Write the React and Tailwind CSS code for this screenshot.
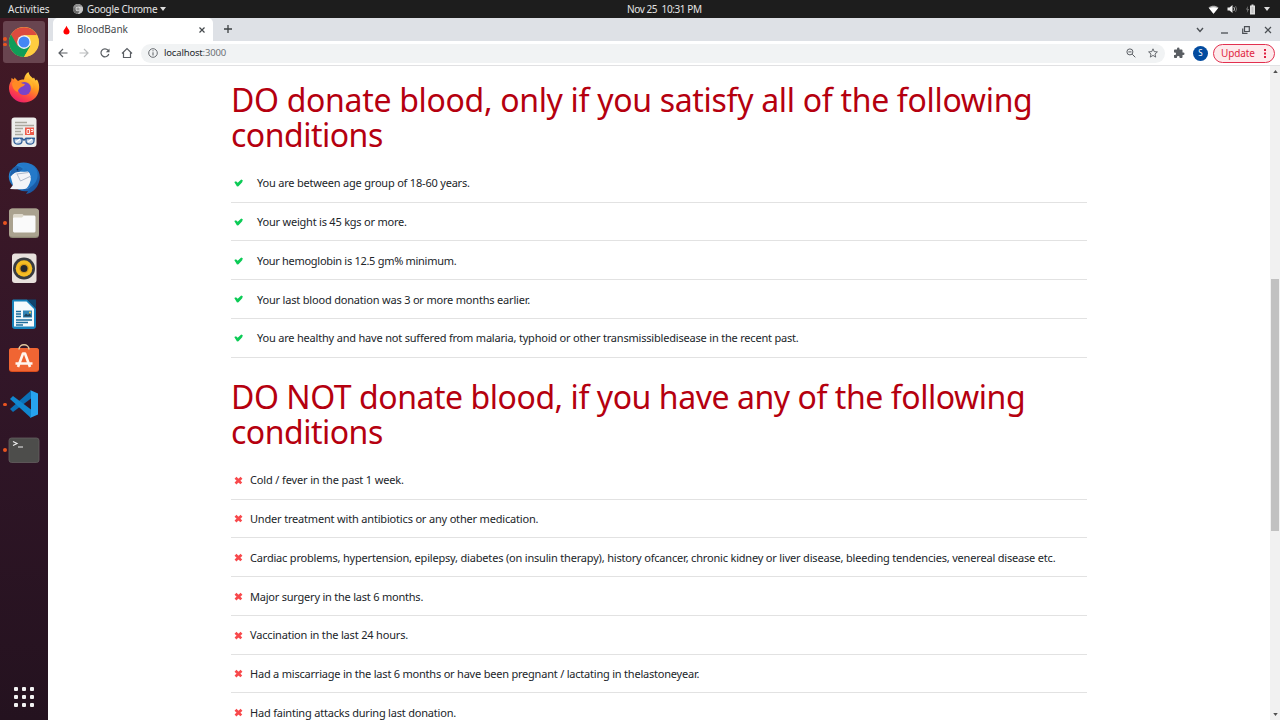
import React from "react";

const DO_ITEMS = [
  ["You are between age group of 18-60 years.", "tracking-[-0.2px]"],
  ["Your weight is 45 kgs or more.", "tracking-[-0.215px]"],
  ["Your hemoglobin is 12.5 gm% minimum.", "tracking-[-0.29px]"],
  ["Your last blood donation was 3 or more months earlier.", "tracking-[-0.19px]"],
  ["You are healthy and have not suffered from malaria, typhoid or other transmissibledisease in the recent past.", "tracking-[-0.195px]"],
];

const DONT_ITEMS = [
  ["Cold / fever in the past 1 week.", "tracking-[-0.14px]"],
  ["Under treatment with antibiotics or any other medication.", "tracking-[-0.18px]"],
  ["Cardiac problems, hypertension, epilepsy, diabetes (on insulin therapy), history ofcancer, chronic kidney or liver disease, bleeding tendencies, venereal disease etc.", "tracking-[-0.187px]"],
  ["Major surgery in the last 6 months.", "tracking-[-0.22px]"],
  ["Vaccination in the last 24 hours.", "tracking-[-0.18px]"],
  ["Had a miscarriage in the last 6 months or have been pregnant / lactating in thelastoneyear.", "tracking-[-0.213px]"],
  ["Had fainting attacks during last donation.", "tracking-[-0.2px]"],
];

function ChromeLogo({ className, mono }) {
  const [r, y, g, b] = mono
    ? ["#8c8c8c", "#c4c4c4", "#6b6b6b", "#9a9a9a"]
    : ["#dd4b3e", "#ffcd40", "#109d58", "#4487f4"];
  return (
    <svg viewBox="0 0 48 48" className={className}>
      <circle cx="24" cy="24" r="24" fill={y} />
      <path d="M24 24 L3.2 12 A24 24 0 0 0 24 48 L34.4 30 Z" fill={g} />
      <path d="M24 24 L13.6 30 L3.2 12 A24 24 0 0 1 44.8 13 L24 13 Z" fill={r} />
      <path d="M24 13 H44.8 A24 24 0 0 1 24 48 L34.4 30 Z" fill={y} />
      <circle cx="24" cy="24" r="11" fill="#f4f4f4" />
      <circle cx="24" cy="24" r="8.8" fill={b} />
    </svg>
  );
}

function Firefox() {
  return (
    <svg viewBox="0 0 32 32" className="size-8">
      <defs>
        <linearGradient id="ffBody" x1="0.8" y1="0" x2="0.25" y2="1">
          <stop offset="0" stopColor="#ffe34a" />
          <stop offset="0.4" stopColor="#ff9a1f" />
          <stop offset="0.7" stopColor="#ff4a42" />
          <stop offset="1" stopColor="#e8196f" />
        </linearGradient>
      </defs>
      <path d="M20.500 1 C21 4 23 5.500 25 7.500 L26 6.500 L27.500 9.500 L29 8.500 C31 12 31.500 15 31 18.500 C30 26.500 23.500 31.500 16 31.500 C8 31.500 1.500 25.500 1 18 C.8 14.500 1.800 12 3.200 10 L3.500 7 L6 8.500 L6.500 6.500 L10 10 C12 8.500 14 8.500 16 8.500 C16.500 5 18 2.500 20.500 1Z" fill="url(#ffBody)" />
      <circle cx="16.300" cy="17.500" r="6.600" fill="#7844c8" />
      <path d="M4 12 C7 9.500 12 10 14 12.500 L17 13 C16.500 15 14 15.500 12.500 16.500 C11 18 9.500 19 10 21 C6 20 4 16 4 12Z" fill="#ff8a24" />
      <path d="M14 10 C20 9 24 13 24 18 C26 14 24 9.500 20.500 8.500 Z" fill="#ffb52b" />
    </svg>
  );
}

function DocumentViewer() {
  return (
    <svg viewBox="0 0 32 32" className="size-8">
      <rect x="3.500" y="1.500" width="25" height="29.500" rx="3" fill="#eeeeec" />
      <g stroke="#aaa99f" strokeWidth="1.300">
        <path d="M7 6.500H19M7 9.500H26M7 12.500H15M7 15.500H13M7 18.500H15" />
      </g>
      <rect x="17" y="11.500" width="9" height="7.500" fill="#ed5c4c" />
      <path d="M19 17.500V13.500H21.500V17.500ZM23 13.500H25V15.500H23" fill="none" stroke="#fff" strokeWidth=".9" />
      <path d="M5 22.500H14L16 24L18 22.500H27" fill="none" stroke="#315f98" strokeWidth="1.500" />
      <path d="M6 22.500H14V25C14 29 6.500 29.500 6 25ZM18 22.500H26V25C25.500 29.500 18 29 18 25Z" fill="#c9d9ea" stroke="#315f98" strokeWidth="1.300" />
      <path d="M8 26L12 23M20 26L24 23" stroke="#fff" strokeWidth="1.200" />
    </svg>
  );
}

function Thunderbird() {
  return (
    <svg viewBox="0 0 32 32" className="size-8">
      <defs>
        <linearGradient id="tb" x1="0" y1="0" x2="1" y2="1">
          <stop offset="0" stopColor="#2b94e2" />
          <stop offset="1" stopColor="#154a94" />
        </linearGradient>
      </defs>
      <path d="M10 1.500C15 -.5 22 .5 26.500 4C31.500 8 33 15 31 20C29 27 24 31 18 32L20 29C15 30 9 28 5 24C1 20 -.5 15 2 9L6 6Z" fill="url(#tb)" />
      <path d="M2.500 14L8 9.500L21 10L25.500 17L21 26C15 28 9 27 2 27L5 23Z" fill="#f3f5f8" />
      <path d="M8 12L12.500 19.500L24 15M8 12L21 11" fill="none" stroke="#aebacb" strokeWidth="1" />
      <path d="M8 4C12 2 17 5 21 10C24 15 23 22 18 27C28 24 32 15 28 7C23 0 14 -1 8 4Z" fill="#2479c9" />
      <path d="M5 16L9 11L20 9.500L22 13L22.500 18L19 24C13 26.500 8 26 5 23Z" fill="#f3f5f8" />
      <path d="M9 12L12.500 19L22 14.500M9 12L20.500 10.500" fill="none" stroke="#aebacb" strokeWidth="1" />
      <path d="M5 6C2.500 9 1.500 12 2.500 15C5 11 8 10 11 10L15 7C13 5 11 4 8 4Z" fill="#1e63ad" />
      <circle cx="9.500" cy="7.500" r=".9" fill="#092d57" />
    </svg>
  );
}

function Files() {
  return (
    <svg viewBox="0 0 32 32" className="size-8">
      <rect x="1" y="1.500" width="30" height="29.500" rx="3.500" fill="#8f8876" />
      <rect x="1" y="1.500" width="30" height="28.300" rx="3.500" fill="#aaa28f" />
      <path d="M5 9C5 7.500 5.500 7 7 7H14.500L16.500 9H25C26.500 9 27 9.500 27 11V23C27 24.500 26.500 25 25 25H7C5.500 25 5 24.500 5 23Z" fill="#ddd8cb" />
      <path d="M5 11.500C5 10.500 5.500 10.500 7 10.500H14L16 8.500H25.500C27 8.500 27.500 9 27.500 10.500V23.500C27.500 25 27 25.500 25.500 25.500H7C5.500 25.500 5 25 5 23.500Z" fill="#fafafa" />
    </svg>
  );
}

function Rhythmbox() {
  return (
    <svg viewBox="0 0 32 32" className="size-8">
      <rect x="4" y="1.500" width="24.500" height="29.500" rx="3" fill="#e8e1dd" />
      <circle cx="16" cy="16.500" r="11" fill="#383b40" />
      <circle cx="16" cy="16.500" r="8.300" fill="#f5bd23" />
      <circle cx="16" cy="16.500" r="4.800" fill="#d99c1a" />
      <circle cx="16" cy="16.500" r="3.500" fill="#26282c" />
    </svg>
  );
}

function Writer() {
  return (
    <svg viewBox="0 0 32 32" className="size-8">
      <path d="M6 1.500H19L28 10.500V28C28 30 27 31 25 31H7C5 31 4 30 4 28V3.500C4 2 4.500 1.500 6 1.500Z" fill="#1783bc" />
      <path d="M6 3.500H18.500L26 11V28.500H6Z" fill="#f5fafc" />
      <path d="M19 1.500H28V10.500Z" fill="#0f456e" />
      <path d="M8 13.500H13M8 16H13M8 18.500H13M8 22H24M8 24.500H20M8 27H15" stroke="#1d6e9d" strokeWidth="1.300" />
      <rect x="15" y="12.500" width="9" height="7" fill="#3385b6" />
      <path d="M15.500 18.500L18 15.500L20 17L21.500 15.500L23.500 18.500" fill="#21445b" />
      <circle cx="22" cy="14.500" r="1" fill="#ffd94a" />
    </svg>
  );
}

function Software() {
  return (
    <svg viewBox="0 0 32 32" className="size-8">
      <rect x="1" y="5" width="30" height="24" rx="3" fill="#d94c1c" />
      <rect x="1" y="5" width="30" height="23" rx="3" fill="#f06533" />
      <path d="M11 6.500C11 .3 21 .3 21 6.500" fill="none" stroke="#e3caa0" strokeWidth="1.500" />
      <path d="M10 24L15 10.500H17L22 24M7.500 20.500H24.500" fill="none" stroke="#fff5ee" strokeWidth="2.600" strokeLinejoin="round" />
    </svg>
  );
}

function VSCode() {
  return (
    <svg viewBox="0 0 32 32" className="size-8">
      <path d="M23 2.500L2 21L5 24L23 10.500Z" fill="#0b70b7" />
      <path d="M2 11L5 8L23 21.500V30Z" fill="#1187cf" />
      <path d="M22 2L30 5.500V26.500L22 30C22.700 29.500 23 29 23 28V4C23 3 22.700 2.500 22 2Z" fill="#27a3ef" />
    </svg>
  );
}

function Terminal() {
  return (
    <svg viewBox="0 0 32 32" className="size-8">
      <rect x="1" y="4" width="30" height="24.500" rx="2.500" fill="#4d4d4b" stroke="#65605f" strokeWidth=".8" />
      <path d="M5 7.500L9 9.500L5 11.500M10 13H15" fill="none" stroke="#eee" strokeWidth="1.200" />
    </svg>
  );
}

const DOCK = [
  { icon: <ChromeLogo className="size-[30px]" />, dots: 2, active: true },
  { icon: <Firefox /> },
  { icon: <DocumentViewer /> },
  { icon: <Thunderbird /> },
  { icon: <Files />, dots: 1 },
  { icon: <Rhythmbox /> },
  { icon: <Writer /> },
  { icon: <Software /> },
  { icon: <VSCode />, dots: 1 },
  { icon: <Terminal />, dots: 1 },
];

function TopBar() {
  return (
    <header className="relative flex h-[18px] shrink-0 items-center bg-[#1d1d1d] text-[10px] leading-[18px] whitespace-nowrap text-[#e4e4e4]">
      <span className="ml-2 w-[65px]">Activities</span>
      <ChromeLogo mono className="size-[10px]" />
      <span className="ml-1 tracking-[-0.27px]">Google Chrome</span>
      <svg viewBox="0 0 6 4" className="ml-[3px] h-1 w-1.5"><path d="M0 0H6L3 4Z" fill="#ddd" /></svg>
      <span className="absolute left-[627px] whitespace-pre tracking-[-0.4px]">Nov 25  10:31 PM</span>
      <div className="ml-auto flex items-center pr-[10px]">
        <svg viewBox="0 0 11 9" className="mr-2 h-[9px] w-[11px]">
          <path d="M.5 2.500C3.500 0 7.500 0 10.500 2.500L5.500 8.800Z" fill="#aaa" />
          <path d="M1 3.300C4 1.800 7 1.800 10 3.300L5.500 8.800Z" fill="#fff" />
        </svg>
        <svg viewBox="0 0 11 10" className="mr-[7px] h-2.5 w-[11px]">
          <path d="M.5 3.500H2.500L5.500 1V9L2.500 6.500H.5Z" fill="#eee" />
          <path d="M6.800 3Q8.500 5 6.800 7" fill="none" stroke="#bbb" />
          <path d="M8.500 2Q10.800 5 8.500 8" fill="none" stroke="#666" />
        </svg>
        <svg viewBox="0 0 11 11" className="mr-[8px] h-[11px] w-[11px]">
          <path d="M3 2L1 5.500H2.500L1.800 9L4 5H2.500Z" fill="#888" />
          <path d="M6.500 .5H8.500V1.500H10V10.500H5V1.500H6.500Z" fill="#ddd" />
          <path d="M6.500 3H8.500V9H6.500Z" fill="#c2c2c2" />
        </svg>
        <svg viewBox="0 0 6 4" className="h-1 w-1.5"><path d="M0 0H6L3 4Z" fill="#ddd" /></svg>
      </div>
    </header>
  );
}

function Dock() {
  return (
    <aside className="flex w-12 shrink-0 flex-col bg-linear-to-b from-[#431925] via-[#321628] to-[#24121f] pt-[1px]">
      {DOCK.map((d, i) => (
        <div key={i} className="flex h-[45.35px] items-center">
          <div className={`ml-[3px] flex h-[42px] w-[42px] items-center rounded-[3px] ${d.active ? "bg-[#694550]" : ""}`}>
            <div className="flex w-[5px] shrink-0 flex-col gap-[2px]">
              {Array.from({ length: d.dots || 0 }, (_, k) => (
                <i key={k} className="size-[3.5px] rounded-full bg-[#e95420]" />
              ))}
            </div>
            <div className="flex w-8 shrink-0 justify-center">{d.icon}</div>
          </div>
        </div>
      ))}
      <div className="mt-auto mb-[13px] grid grid-cols-3 gap-1 self-center">
        {Array.from({ length: 9 }, (_, k) => (
          <i key={k} className="size-1 rounded-[1px] bg-[#f2f2f2]" />
        ))}
      </div>
    </aside>
  );
}

function TabStrip() {
  return (
    <div className="flex h-[23px] shrink-0 items-end bg-[#dee1e6]">
      <div className="ml-[5px] flex h-[23px] w-[160px] items-center rounded-t-[5px] bg-white pl-[10px] text-[10px] text-[#45494d]">
        <svg viewBox="0 0 8 10" className="h-[10px] w-[7px]"><path d="M4 0C5 3 7.500 4.500 7.500 6.700A3.500 3.300 0 0 1 .5 6.700C.5 4.500 3 3 4 0Z" fill="#f00" /></svg>
        <span className="ml-[7px]">BloodBank</span>
        <svg viewBox="0 0 6 6" className="mr-[8px] ml-auto size-[6px]"><path d="M.5 .5L5.500 5.500M5.500 .5L.5 5.500" stroke="#45494d" strokeWidth="1.200" /></svg>
      </div>
      <svg viewBox="0 0 8 8" className="mb-[8px] ml-[11px] size-2"><path d="M4 0V8M0 4H8" stroke="#3c4043" strokeWidth="1.300" /></svg>
      <div className="ml-auto flex h-[23px] items-center pr-2 text-[#4b4f54]">
        <svg viewBox="0 0 8 6" className="mr-[17px] h-[6px] w-2"><path d="M1 1L4 4.500L7 1" fill="none" stroke="currentColor" strokeWidth="1.400" /></svg>
        <svg viewBox="0 0 7 8" className="mr-[14px] h-2 w-[7px]"><path d="M0 7H7" stroke="currentColor" strokeWidth="1.300" /></svg>
        <svg viewBox="0 0 8 8" className="mr-[14px] size-2"><path d="M2.500 .7H7.300V5.500H2.500ZM.7 2.500V7.300H5.500" fill="none" stroke="currentColor" strokeWidth="1.200" /></svg>
        <svg viewBox="0 0 8 8" className="size-2"><path d="M1 1L7 7M7 1L1 7" stroke="currentColor" strokeWidth="1.200" /></svg>
      </div>
    </div>
  );
}

function Toolbar() {
  return (
    <div className="flex h-[25px] shrink-0 items-center border-b border-[#e1e1e3] bg-white text-[#5a5e63]">
      <svg viewBox="0 0 10 10" className="ml-[10px] size-[10px]"><path d="M9.500 5H1M5 1L1 5L5 9" fill="none" stroke="currentColor" strokeWidth="1.200" /></svg>
      <svg viewBox="0 0 10 10" className="ml-[11px] size-[10px] text-[#b9bbbd]"><path d="M.5 5H9M5 1L9 5L5 9" fill="none" stroke="currentColor" strokeWidth="1.200" /></svg>
      <svg viewBox="0 0 10 10" className="ml-[11px] size-[10px]"><path d="M8.800 6A4 4 0 1 1 8 2.200L9 3.300" fill="none" stroke="currentColor" strokeWidth="1.200" /><path d="M9.500 .5V4.200H5.800Z" fill="currentColor" /></svg>
      <svg viewBox="0 0 12 12" className="ml-[11px] size-3"><path d="M1 6.500L6 1.500L11 6.500M2.500 5.500V10.500H9.500V5.500" fill="none" stroke="currentColor" strokeWidth="1.200" /></svg>
      <div className="ml-[8px] flex h-[19px] w-[1024px] items-center rounded-full bg-[#f1f3f4]">
        <svg viewBox="0 0 10 10" className="ml-[7px] size-[10px]"><circle cx="5" cy="5" r="4.300" fill="none" stroke="currentColor" strokeWidth=".9" /><path d="M5 4.300V7.500M5 2.300V3.300" stroke="currentColor" strokeWidth="1" /></svg>
        <span className="ml-[6px] text-[9.5px] tracking-[-0.17px] text-[#25282c]">localhost<span className="text-[#6c7074]">:3000</span></span>
        <svg viewBox="0 0 10 10" className="mr-3 ml-auto size-[10px]"><circle cx="3.900" cy="3.900" r="3" fill="none" stroke="currentColor" /><path d="M2.300 3.900H5.500M6.200 6.200L9.300 9.300" stroke="currentColor" /></svg>
        <svg viewBox="0 0 10 10" className="mr-[7px] size-[10px]"><path d="M5 .8L6.200 3.600L9.400 3.900L7 6L7.700 9.100L5 7.400L2.300 9.100L3 6L.6 3.900L3.800 3.600Z" fill="none" stroke="currentColor" strokeWidth=".9" /></svg>
      </div>
      <svg viewBox="0 0 24 24" className="ml-[8px] size-3"><path d="M20.500 11H19V7c0-1.100-.9-2-2-2h-4V3.500a2.500 2.500 0 0 0-5 0V5H4c-1.100 0-2 .9-2 2v3.800h1.500a2.700 2.700 0 0 1 0 5.400H2V20c0 1.100.9 2 2 2h3.800v-1.500a2.700 2.700 0 0 1 5.400 0V22H17c1.100 0 2-.9 2-2v-4h1.500a2.500 2.500 0 0 0 0-5z" fill="currentColor" /></svg>
      <span className="ml-2 flex size-[15px] items-center justify-center rounded-full bg-[#034b9f] text-[8px] text-white">S</span>
      <div className="ml-[5px] flex h-[19px] w-[62px] items-center rounded-full border border-[#e2304f] bg-[#fdeaec] pl-[7px] text-[10px] text-[#df1f41]">
        <span className="tracking-[-0.1px]">Update</span>
        <svg viewBox="0 0 2 9" className="mr-2 ml-auto h-[9px] w-[2px]"><path d="M0 0H2V2H0ZM0 3.500H2V5.500H0ZM0 7H2V9H0Z" fill="#df1f41" /></svg>
      </div>
    </div>
  );
}

function Check() {
  return (
    <svg viewBox="0 0 9 8" className="h-2 w-[9px] shrink-0">
      <path d="M.3 3L2 2.200L3.700 3.800L7.200 .5L8.800 1.200L8.200 3.200L4.500 7.300L3 7.500Z" fill="#0ccb56" />
    </svg>
  );
}

function Cross() {
  return (
    <svg viewBox="0 0 9 9" className="size-[9px] shrink-0">
      <path d="M1.500 1.700L7.300 7.400M7.500 1.700L1.500 7.400" stroke="#f8494c" strokeWidth="2.700" />
    </svg>
  );
}

function Heading({ first, firstClass, className }) {
  return (
    <h1 className={`text-[32px] leading-[35px] whitespace-nowrap text-[#b5000f] ${className}`}>
      <span className={`block ${firstClass}`}>{first}</span>
      <span className="block tracking-[-0.5px]">conditions</span>
    </h1>
  );
}

function List({ items, icon, gap }) {
  return (
    <ul className="mt-[11.8px] text-[11px] text-[#212529]">
      {items.map(([text, track]) => (
        <li key={text} className="flex h-[38.75px] items-center border-b border-[#e2e2e2] pt-[1px] pl-[3px] whitespace-nowrap">
          {icon}
          <span className={`pt-[1px] ${gap} ${track}`}>{text}</span>
        </li>
      ))}
    </ul>
  );
}

export default function App() {
  return (
    <div className="flex h-[720px] w-[1280px] flex-col overflow-hidden bg-white font-['Noto_Sans',sans-serif]">
      <TopBar />
      <div className="flex min-h-0 flex-1">
        <Dock />
        <div className="flex min-w-0 flex-1 flex-col">
          <TabStrip />
          <Toolbar />
          <div className="flex min-h-0 flex-1">
            <main className="min-w-0 flex-1 overflow-hidden pr-[183px] pl-[183px]">
              <Heading className="mt-[16px]" first="DO donate blood, only if you satisfy all of the following" firstClass="tracking-[-0.32px]" />
              <List items={DO_ITEMS} icon={<Check />} gap="ml-[14px]" />
              <Heading className="mt-[21.5px]" first="DO NOT donate blood, if you have any of the following" firstClass="tracking-[-0.45px]" />
              <List items={DONT_ITEMS} icon={<Cross />} gap="ml-[7px]" />
            </main>
            <div className="flex w-[10px] shrink-0 flex-col items-center bg-[#f1f1f1]">
              <svg viewBox="0 0 6 4" className="mt-[4px] h-[3px] w-[5px]"><path d="M0 4L3 0L6 4Z" fill="#505050" /></svg>
              <div className="mt-[206px] h-[252px] w-2 bg-[#c1c1c1]" />
              <svg viewBox="0 0 6 4" className="mt-auto mb-[4px] h-[3px] w-[5px]"><path d="M0 0L3 4L6 0Z" fill="#505050" /></svg>
            </div>
          </div>
        </div>
      </div>
    </div>
  );
}
